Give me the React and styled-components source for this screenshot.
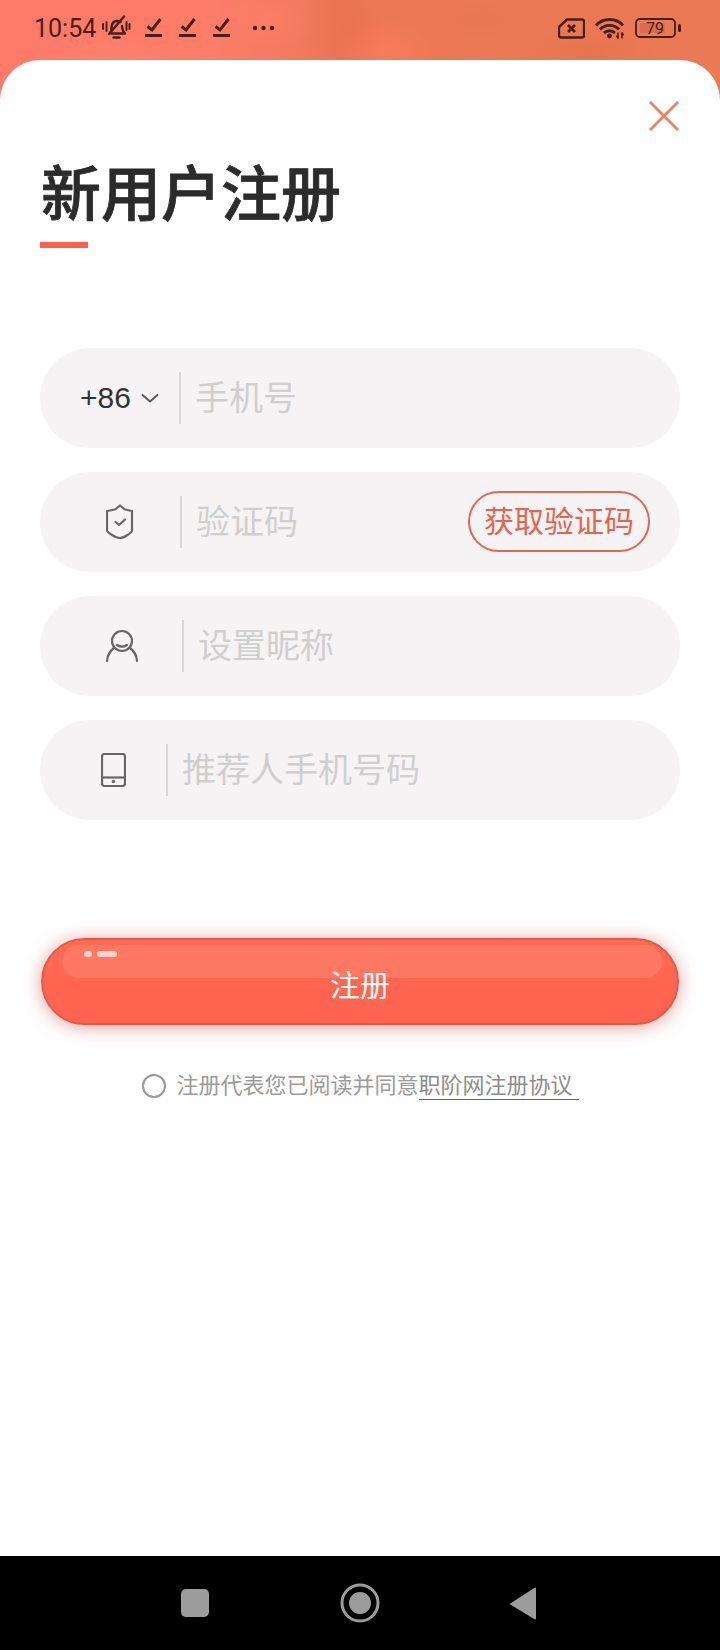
import React from 'react'
import styled, { createGlobalStyle } from 'styled-components'

const GlobalStyle = createGlobalStyle`
  html, body {
    margin: 0;
    padding: 0;
    background: #fff;
  }
  * {
    box-sizing: border-box;
  }
`

const CJK = `"Noto Sans CJK SC", "Liberation Sans", sans-serif`

const Page = styled.div`
  width: 720px;
  height: 1650px;
  display: flex;
  flex-direction: column;
  font-family: ${CJK};
  background:
    radial-gradient(ellipse 60px 30px at 110px 60px, rgba(255, 135, 115, 0.5), transparent),
    radial-gradient(ellipse 50px 30px at 270px 20px, rgba(255, 130, 105, 0.45), transparent),
    radial-gradient(ellipse 40px 60px at 345px 25px, rgba(232, 108, 78, 0.6), transparent),
    radial-gradient(ellipse 50px 30px at 385px 50px, rgba(255, 125, 95, 0.6), transparent),
    radial-gradient(ellipse 70px 25px at 590px 52px, rgba(225, 112, 78, 0.55), transparent),
    radial-gradient(ellipse 40px 20px at 480px 20px, rgba(228, 115, 80, 0.5), transparent),
    linear-gradient(90deg, #ff7a69 0%, #fc7d68 30%, #ee7858 46%, #ec7856 62%, #ea7955 100%);
`

const StatusBar = styled.div`
  height: 60px;
  flex: none;
  display: flex;
  align-items: center;
  justify-content: space-between;
  padding: 0 39px 4px 35px;
  color: #46201a;
`

const StatusGroup = styled.div`
  display: flex;
  align-items: center;
`

const Time = styled.span`
  font-family: Roboto, sans-serif;
  font-size: 25px;
  width: 62px;
  margin-left: -1px;
`

const Sheet = styled.main`
  flex: 1;
  background: #fff;
  border-radius: 40px 40px 0 0;
  padding: 42px 40px 0;
  display: flex;
  flex-direction: column;
`

const CloseButton = styled.button`
  align-self: flex-end;
  width: 30px;
  height: 30px;
  margin: -1px 1px 1px 0;
  padding: 0;
  border: 0;
  background: none;
  display: block;
`

const Title = styled.h1`
  margin: 28px 0 0 1px;
  font-size: 60px;
  line-height: 60px;
  font-weight: 500;
  color: #2b2b2b;
  -webkit-text-stroke: 0.8px #2b2b2b;
`

const TitleBar = styled.div`
  width: 48px;
  height: 6px;
  margin-top: 22px;
  background: #ff5f4b;
`

const Fields = styled.div`
  margin-top: 100px;
  display: flex;
  flex-direction: column;
  gap: 24px;
`

const Field = styled.div`
  height: 100px;
  border-radius: 50px;
  background: #f5f3f4;
  display: flex;
  align-items: center;
`

const Lead = styled.div`
  flex: none;
  width: ${p => p.$width}px;
  padding-left: ${p => p.$inset}px;
  display: flex;
  align-items: center;
`

const Divider = styled.div`
  flex: none;
  width: 2px;
  height: 52px;
  margin-right: 14px;
  background: #d9d8d8;
`

const Hint = styled.span`
  flex: 1;
  padding-bottom: 6px;
  font-size: 34px;
  color: #cfcfcf;
`

const Code = styled.span`
  font-family: "Liberation Sans", sans-serif;
  font-size: 30px;
  color: #333;
`

const CodeButton = styled.button`
  flex: none;
  width: 182px;
  height: 61px;
  margin: 0 30px 2px 0;
  padding: 0 0 4px;
  border: 2px solid #e8654f;
  border-radius: 31px;
  background: none;
  font-family: ${CJK};
  font-size: 30px;
  color: #e8634d;
`

const SubmitButton = styled.button`
  position: relative;
  width: 638px;
  height: 87px;
  margin: 118px 0 0 1px;
  padding: 2px 0 0;
  border: 2px solid #e25a43;
  border-radius: 44px;
  background: linear-gradient(180deg, #ff6a55 0%, #ff6350 100%);
  box-shadow: 0 2px 18px rgba(195, 70, 70, 0.5);
  font-family: ${CJK};
  font-size: 30px;
  color: #fff;
`

const Gloss = styled.span`
  position: absolute;
  left: 19px;
  right: 15px;
  top: 5px;
  height: 33px;
  border-radius: 17px;
  background: #ff7861;
`

const GlossDot = styled.span`
  position: absolute;
  top: 6px;
  left: ${p => p.$left}px;
  width: ${p => p.$width}px;
  height: 6px;
  border-radius: 3px;
  background: #ffd4cc;
`

const Label = styled.span`
  position: relative;
`

const Agreement = styled.div`
  margin-top: 46px;
  height: 30px;
  display: flex;
  align-items: center;
  justify-content: center;
  font-size: 22px;
  color: #9b9b9b;
`

const Radio = styled.span`
  flex: none;
  width: 24px;
  height: 24px;
  margin: 0 10px 0 1px;
  border: 2px solid #999;
  border-radius: 50%;
`

const AgreementText = styled.span`
  padding-bottom: 6px;
`

const AgreementLink = styled.a`
  padding: 0 6px 1px 0;
  margin-top: -3px;
  line-height: 29px;
  border-bottom: 1px solid #666;
  color: #8c8c8c;
  white-space: pre;
`

const NavBar = styled.nav`
  height: 94px;
  flex: none;
  padding: 0 184px 0 181px;
  background: #000;
  display: flex;
  align-items: center;
  justify-content: space-between;
`

const NavSquare = styled.div`
  width: 28px;
  height: 28px;
  border-radius: 5px;
  background: #9c9c9c;
`

const Ink = '#46201a'

const BellOff = () => (
  <svg width="30" height="26" viewBox="0 0 30 26" fill="none" stroke={Ink} strokeWidth="2.400" strokeLinecap="round" strokeLinejoin="round" style={{ margin: '-1px 0 0 5px' }}>
    <path d="M9 18.500c1.500-1.500 1.500-3 1.500-6 0-3.500 2-6 5-6.500 1.500-.2 3 .2 4 1" />
    <path d="M21 11c.3 3.500.7 5.500 3 7.500H11" />
    <path d="M12.500 22.500h6" />
    <path d="M8 19L23 1.500" />
    <path d="M2 9v5M5.500 7v9M25.500 7v8M28.500 9v5" strokeWidth="2" />
  </svg>
)

const TaskMark = ({ gap }) => (
  <svg width="17" height="20" viewBox="0 0 17 20" fill="none" stroke={Ink} style={{ marginLeft: gap }}>
    <path d="M2.500 8.500l4.500 3.500L15.500 1" strokeWidth="3" />
    <path d="M0 17.500h17" strokeWidth="3" />
  </svg>
)

const MoreDots = () => (
  <svg width="24" height="6" viewBox="0 0 24 6" fill={Ink} style={{ marginLeft: 21 }}>
    <circle cx="4" cy="3" r="2.200" />
    <circle cx="12.500" cy="3" r="2.200" />
    <circle cx="21" cy="3" r="2.200" />
  </svg>
)

const SimOff = () => (
  <svg width="27" height="21" viewBox="0 0 27 21" fill="none" stroke={Ink} strokeLinejoin="round">
    <path d="M9 1.500h15a2 2 0 0 1 2 2v14a2 2 0 0 1-2 2H3a2 2 0 0 1-2-2V9z" strokeWidth="2.400" />
    <path d="M10 7l7 7M17 7l-7 7" strokeWidth="2.800" />
  </svg>
)

const Wifi = () => (
  <svg width="29" height="22" viewBox="0 0 29 22" fill="none" stroke={Ink} strokeWidth="2.800" style={{ marginLeft: 10 }}>
    <path d="M1 8.500C8 .5 21 .5 28 8.500" />
    <path d="M5 12.500c5-5.500 14-5.500 19 0" />
    <path d="M9 16c3-3 8-3 11 0" />
    <circle cx="14.500" cy="19" r="2.400" fill={Ink} stroke="none" />
    <path d="M23 15.500v6M27 15.500v6" strokeWidth="1.500" />
    <path d="M21 19l2 2.500 0-2.500zM27 15.500l2 2.500h-2z" fill={Ink} strokeWidth="0.800" />
  </svg>
)

const Battery = () => (
  <svg width="46" height="20" viewBox="0 0 46 20" fill="none" style={{ marginLeft: 11 }}>
    <rect x="1" y="1" width="39" height="18" rx="4" stroke={Ink} strokeWidth="1.800" />
    <rect x="5" y="5" width="25" height="10" fill="#d96d4e" />
    <rect x="43" y="6" width="3" height="8" rx="1.500" fill={Ink} />
    <text x="20" y="15.500" textAnchor="middle" fontFamily="Roboto, sans-serif" fontSize="16" fill={Ink}>79</text>
  </svg>
)

const CloseIcon = () => (
  <svg width="30" height="30" viewBox="0 0 30 30" fill="none" stroke="#e98261" strokeWidth="2.800">
    <path d="M1 1l28 28M29 1L1 29" />
  </svg>
)

const Chevron = () => (
  <svg width="18" height="10" viewBox="0 0 18 10" fill="none" stroke="#555" strokeWidth="1.800" style={{ marginLeft: 10 }}>
    <path d="M1 1.500l8 7 8-7" />
  </svg>
)

const ShieldIcon = () => (
  <svg width="28" height="36" viewBox="0 0 28 36" fill="none" stroke="#666" strokeWidth="2.200" strokeLinejoin="round" strokeLinecap="round">
    <path d="M14 1.500l5 4 7 1.500v19.500c0 2-8 7.500-12 7.500S1 28.500 1 26.500V7l8-1.500z" />
    <path d="M9.500 18l3.500 3 6-5.500" />
  </svg>
)

const PersonIcon = () => (
  <svg width="32" height="34" viewBox="0 0 32 34" fill="none" stroke="#666" strokeWidth="2.200" strokeLinecap="round">
    <circle cx="16" cy="12" r="10" />
    <path d="M11 16c3 2 7 2 10 0" />
    <path d="M1 32c.5-6 3-10 7-13M31 32c-.5-6-3-10-7-13" />
  </svg>
)

const TabletIcon = () => (
  <svg width="25" height="34" viewBox="0 0 25 34" fill="none" stroke="#666" strokeWidth="2.200">
    <rect x="1" y="1" width="23" height="32" rx="2.500" />
    <path d="M1 24.500h23" />
    <circle cx="12.500" cy="28.500" r="1.700" fill="#666" stroke="none" />
  </svg>
)

const NavCircle = () => (
  <svg width="40" height="40" viewBox="0 0 40 40" style={{ display: 'block', marginLeft: 1 }}>
    <circle cx="20" cy="20" r="18" fill="none" stroke="#9c9c9c" strokeWidth="3" />
    <circle cx="20" cy="20" r="11" fill="#9c9c9c" />
  </svg>
)

const NavBack = () => (
  <svg width="27" height="33" viewBox="0 0 27 33" style={{ display: 'block' }}>
    <path d="M26 0.500a1 1 0 0 1 1 1v30a1 1 0 0 1-1 1L0.500 17z" fill="#9c9c9c" />
  </svg>
)

const fields = [
  { icon: <ShieldIcon />, width: 140, inset: 66, hint: '验证码', code: true },
  { icon: <PersonIcon />, width: 142, inset: 66, hint: '设置昵称' },
  { icon: <TabletIcon />, width: 126, inset: 61, hint: '推荐人手机号码' },
]

export default function App() {
  return (
    <Page>
      <GlobalStyle />
      <StatusBar>
        <StatusGroup>
          <Time>10:54</Time>
          <BellOff />
          <TaskMark gap={14} />
          <TaskMark gap={17} />
          <TaskMark gap={17} />
          <MoreDots />
        </StatusGroup>
        <StatusGroup>
          <SimOff />
          <Wifi />
          <Battery />
        </StatusGroup>
      </StatusBar>
      <Sheet>
        <CloseButton aria-label="关闭"><CloseIcon /></CloseButton>
        <Title>新用户注册</Title>
        <TitleBar />
        <Fields>
          <Field>
            <Lead $width={139} $inset={40}>
              <Code>+86</Code>
              <Chevron />
            </Lead>
            <Divider />
            <Hint>手机号</Hint>
          </Field>
          {fields.map(f => (
            <Field key={f.hint}>
              <Lead $width={f.width} $inset={f.inset}>{f.icon}</Lead>
              <Divider />
              <Hint>{f.hint}</Hint>
              {f.code && <CodeButton>获取验证码</CodeButton>}
            </Field>
          ))}
        </Fields>
        <SubmitButton>
          <Gloss>
            <GlossDot $left={22} $width={8} />
            <GlossDot $left={35} $width={20} />
          </Gloss>
          <Label>注册</Label>
        </SubmitButton>
        <Agreement>
          <Radio />
          <AgreementText>注册代表您已阅读并同意</AgreementText>
          <AgreementLink>职阶网注册协议</AgreementLink>
        </Agreement>
      </Sheet>
      <NavBar>
        <NavSquare />
        <NavCircle />
        <NavBack />
      </NavBar>
    </Page>
  )
}
